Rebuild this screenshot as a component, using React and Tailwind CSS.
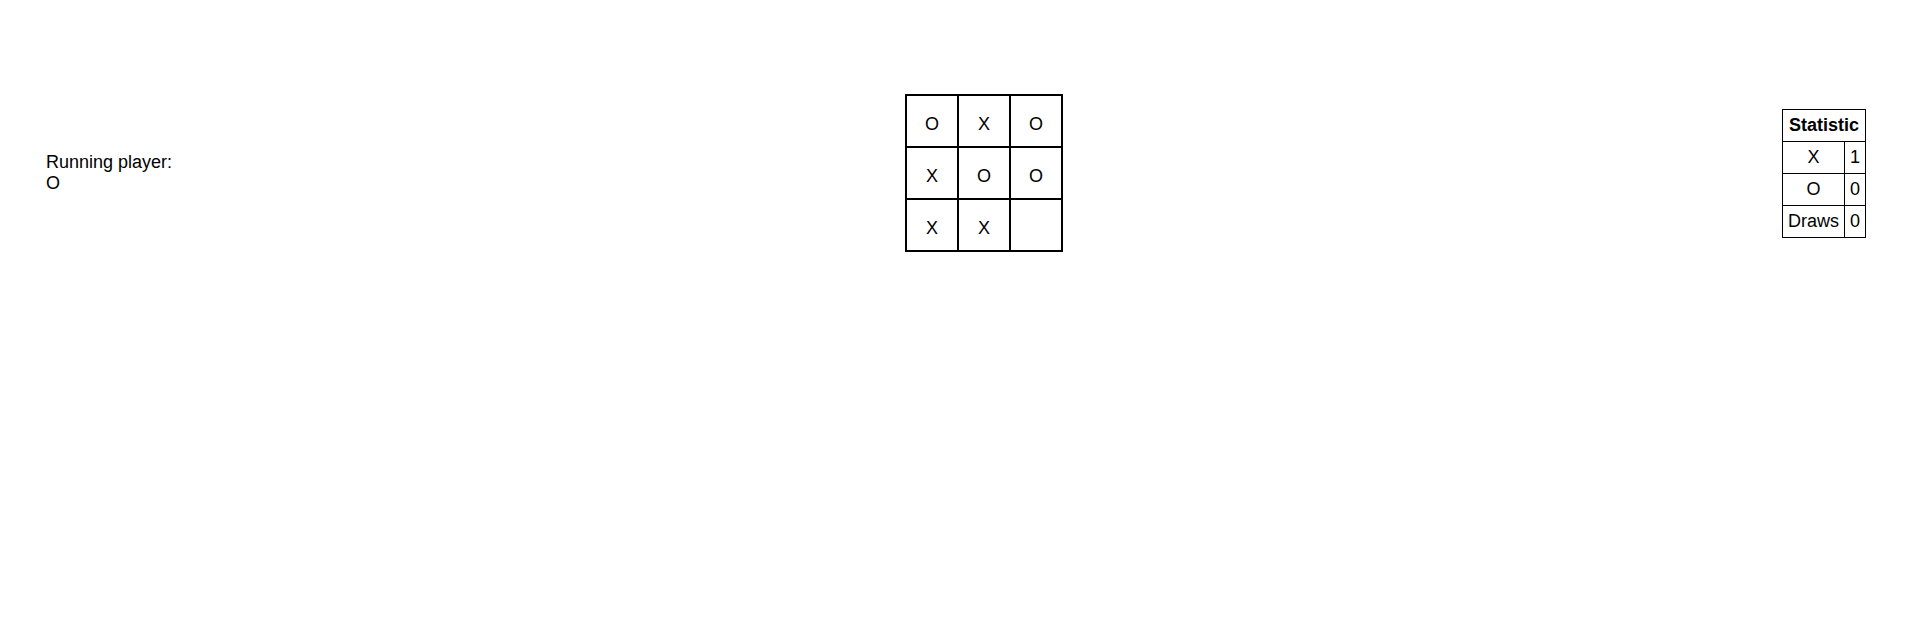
const BOARD = ['O', 'X', 'O', 'X', 'O', 'O', 'X', 'X', ''];

const STATS = [
  { label: 'X', value: 1 },
  { label: 'O', value: 0 },
  { label: 'Draws', value: 0 },
];

export default function App() {
  return (
    <div className="h-[620px] overflow-hidden bg-white text-black font-['Liberation_Sans',Arial,sans-serif] text-[18px] leading-[normal]">
      <div className="flex items-center pt-[94px] pl-[46px] pr-[50px]">
        {/* Current player */}
        <div className="w-[859px] -mt-[1px]">
          <div>Running player:</div>
          <div>O</div>
        </div>

        {/* Board */}
        <div className="grid grid-cols-3 border border-black">
          {BOARD.map((v, i) => (
            <div key={i} className="w-[52px] h-[52px] border border-black flex items-center justify-center pt-[6px]">
              {v}
            </div>
          ))}
        </div>

        {/* Statistics */}
        <table className="ml-auto border-collapse">
          <thead>
            <tr>
              <th colSpan={2} className="border border-black p-[5px] font-bold text-center">Statistic</th>
            </tr>
          </thead>
          <tbody>
            {STATS.map(s => (
              <tr key={s.label}>
                <td className="border border-black p-[5px] text-center">{s.label}</td>
                <td className="border border-black p-[5px] text-center">{s.value}</td>
              </tr>
            ))}
          </tbody>
        </table>
      </div>
    </div>
  );
}
